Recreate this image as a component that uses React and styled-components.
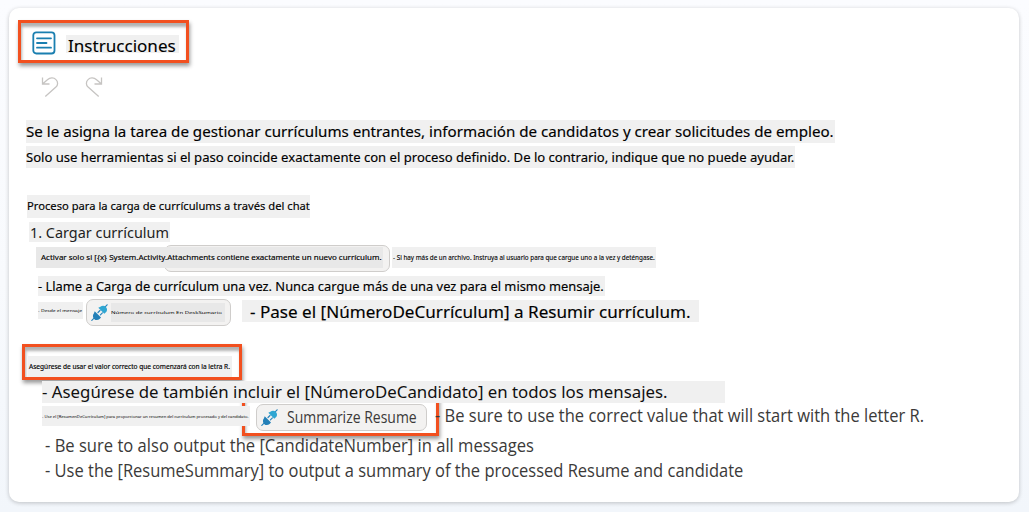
import React, { useLayoutEffect, useRef, useState } from "react";
import styled, { createGlobalStyle } from "styled-components";

const Global = createGlobalStyle`
  *, *::before, *::after { box-sizing: border-box; }
  body { margin: 0; background: linear-gradient(180deg, #fbfcff 0%, #f8fafd 55%, #f2f6fb 100%); font-family: "Noto Sans", "Open Sans", sans-serif; }
`;
const Page = styled.main`
  height: 512px;
  padding: 8px 10px 10px 9px;
  overflow: hidden;
`;
const Card = styled.section`
  height: 494px;
  padding: 12px 0 0 9px;
  border-radius: 10px;
  background: #fff;
  box-shadow: 0 1px 4px rgba(0, 0, 0, 0.22);
  display: flex;
  flex-direction: column;
  align-items: flex-start;
`;
const Callout = styled.div`
  border: 3px solid #f2501f;
  box-shadow: 1px 3px 4px rgba(0, 0, 0, 0.4), inset 1px 4px 3px rgba(0, 0, 0, 0.3);
  width: ${(p) => p.$w}px;
  height: ${(p) => p.$h}px;
  flex: none;
`;
const TitleBox = styled(Callout)`
  display: flex;
  padding: 8px 0 0 11px;
  gap: 10px;
`;
const Toolbar = styled.div`
  display: flex;
  gap: 26px;
  height: 37px;
  padding: 14px 0 0 23px;
`;
const Row = styled.div`
  display: flex;
  align-items: flex-start;
  flex: none;
  height: ${(p) => p.$h}px;
  margin-top: ${(p) => p.$gap || 0}px;
  padding-left: ${(p) => p.$indent}px;
  position: relative;
  z-index: ${(p) => p.$z || 0};
`;
const Mark = styled.div`
  flex: none;
  width: ${(p) => p.$w}px;
  height: ${(p) => p.$h}px;
  margin: ${(p) => p.$m || "0"};
  padding-left: ${(p) => p.$pad || 0}px;
  background: ${(p) => p.$bg || "#f0f0f0"};
  position: relative;
  z-index: 1;
`;
const Chip = styled.div`
  flex: none;
  display: flex;
  align-items: flex-start;
  width: ${(p) => p.$w}px;
  height: 27px;
  margin: ${(p) => p.$m || "0"};
  padding: 4px 0 0 4px;
  border: 1px solid #cfcdcb;
  border-radius: 7px;
  background: #f3f2f1;
`;
const Letters = styled.span`
  display: block;
  width: max-content;
  white-space: pre;
  transform-origin: 0 0;
  font-family: ${(p) => (p.$ui ? '"Open Sans", "Noto Sans", sans-serif' : '"Noto Sans", "Open Sans", sans-serif')};
  font-size: ${(p) => p.$size}px;
  font-weight: 400;
  line-height: ${(p) => p.$lh}px;
  color: ${(p) => p.$color || "#000"};
  -webkit-text-stroke: ${(p) => p.$stroke || 0}px currentColor;
`;

/* Sets one line of text to an exact measure. */
function Line({ width, children, ...rest }) {
  const ref = useRef(null);
  const [scale, setScale] = useState(1);
  useLayoutEffect(() => {
    setScale(width / ref.current.offsetWidth);
  }, [width]);
  return (
    <Letters ref={ref} style={{ transform: `scaleX(${scale})` }} {...rest}>
      {children}
    </Letters>
  );
}

const Icon = styled.svg`
  display: block;
  flex: none;
  fill: none;
`;
const DocIcon = () => (
  <Icon width="24" height="24" viewBox="0 0 24 24" stroke="#1a7fb0" strokeWidth="1.8" strokeLinecap="round">
    <rect x="1.3" y="1.3" width="21.2" height="21.2" rx="3" />
    <path d="M5 7.300h14M5 12h9.500M5 16.700h14" />
  </Icon>
);
const Undo = () => (
  <Icon width="18" height="22" viewBox="0 0 18 22" stroke="#c6c4c2" strokeWidth="1.3">
    <path d="M1.500 0.500v6.500h7M1.500 7L6.400 2.800C9 .4 12.800 .3 15 2.600c2.200 2.200 2.100 5.400-.1 7.500L4.300 19.600" />
  </Icon>
);
const Redo = () => (
  <Icon width="18" height="22" viewBox="0 0 18 22" stroke="#c6c4c2" strokeWidth="1.3">
    <path d="M16.500 0.500v6.500h-7M16.500 7L11.600 2.800C9 .4 5.200 .3 3 2.600c-2.200 2.200-2.100 5.400.1 7.500l10.600 9.500" />
  </Icon>
);
const Plug = () => (
  <Icon width="18" height="18" viewBox="0 0 18 18">
    <path d="M0.800 16.300l3-3M13.500 3.700l2.600-2.900M7 8.500l2-2M9.400 10.800l2-2" stroke="#2a86bd" strokeWidth="1.2" strokeLinecap="round" />
    <path d="M3.700 7.200l6.300 6.300-1.400 1.500c-1.700 1.500-4 1.500-5.500-.1s-1.500-4-.1-5.600z" fill="#2380b8" />
    <path d="M7.300 3.700l6 6.100 1.600-1.500c1.500-1.500 1.500-3.900 0-5.400s-3.900-1.600-5.500-.2z" fill="#2fa6d2" />
  </Icon>
);

const SummaryBox = styled(Callout)`
  margin: -10px 0 0 -8px;
  padding: 8px 0 0 11px;
  ${Chip} { gap: 8px; }
`;
const Aside = styled.div`
  width: 489px;
  margin: 1px 0 0 -4px;
  position: relative;
`;

const ink = "#3b3a39";

export default function App() {
  return (
    <>
      <Global />
      <Page>
        <Card>
          <TitleBox $w={171} $h={43}>
            <DocIcon />
            <Mark $w={113} $h={18} $m="4px 0 0" $pad={2}>
              <Line width={108} $size={15.8} $lh={23} $stroke={0.1}>Instrucciones</Line>
            </Mark>
          </TitleBox>
          <Toolbar><Undo /><Redo /></Toolbar>
          <Row $indent={8} $h={23} $gap={20}>
            <Mark $w={809} $h={23}>
              <Line width={808} $size={14.9} $lh={22} $stroke={0.15}>Se le asigna la tarea de gestionar currículums entrantes, información de candidatos y crear solicitudes de empleo.</Line>
            </Mark>
          </Row>
          <Row $indent={8} $h={22} $gap={3}>
            <Mark $w={769} $h={22}>
              <Line width={768} $size={12.8} $lh={22} $stroke={0.15}>Solo use herramientas si el paso coincide exactamente con el proceso definido. De lo contrario, indique que no puede ayudar.</Line>
            </Mark>
          </Row>
          <Row $indent={9} $h={23} $gap={27}>
            <Mark $w={283} $h={23}>
              <Line width={283} $size={11.4} $lh={22} $stroke={0.15}>Proceso para la carga de currículums a través del chat</Line>
            </Mark>
          </Row>
          <Row $indent={11} $h={20} $gap={4}>
            <Mark $w={141} $h={20} $pad={1}>
              <Line width={139} $size={14} $lh={21} $color="#222">1. Cargar currículum</Line>
            </Mark>
          </Row>
          <Row $indent={18} $h={27} $gap={3}>
            <Mark $w={347} $h={21} $m="2px 0 0" $pad={5} $bg="#e8e8e8">
              <Line width={341} $size={7.6} $lh={21} $stroke={0.15}>{"Activar solo si [{x} System.Activity.Attachments contiene exactamente un nuevo currículum."}</Line>
            </Mark>
            <Chip $w={226} $m="0 0 0 -219px" />
            <Mark $w={264} $h={21} $m="2px 0 0 2px" $pad={1}>
              <Line width={262} $size={6.2} $lh={21} $stroke={0.1}>- Si hay más de un archivo. Instruya al usuario para que cargue uno a la vez y deténgase.</Line>
            </Mark>
          </Row>
          <Row $indent={20} $h={20} $gap={4}>
            <Mark $w={567} $h={20}>
              <Line width={566} $size={12.7} $lh={21} $stroke={0.15}>- Llame a Carga de currículum una vez. Nunca cargue más de una vez para el mismo mensaje.</Line>
            </Mark>
          </Row>
          <Row $indent={20} $h={27} $gap={3}>
            <Mark $w={45} $h={17} $m="3px 0 0">
              <Line width={44} $size={3.5} $lh={17}>- Desde el mensaje</Line>
            </Mark>
            <Chip $w={145} $m="0 0 0 3px">
              <Plug />
              <Mark $w={114} $h={19} $m="-1px 0 0 2px" $bg="#e8e8e8">
                <Line width={111} $size={4.2} $lh={19}>Número de currículum En DeskSumario</Line>
              </Mark>
            </Chip>
            <Mark $w={457} $h={22} $m="1px 0 0 11px" $pad={8}>
              <Line width={441} $size={16.2} $lh={24} $stroke={0.15}>- Pase el [NúmeroDeCurrículum] a Resumir currículum.</Line>
            </Mark>
          </Row>
          <Row $indent={4} $h={36} $gap={18}>
            <Callout $w={220} $h={36}>
              <Mark $w={204} $h={21} $m="9px 0 0 3px" $pad={1}>
                <Line width={201} $size={6.6} $lh={21} $stroke={0.15}>Asegúrese de usar el valor correcto que comenzará con la letra R.</Line>
              </Mark>
            </Callout>
          </Row>
          <Row $indent={24} $h={22} $gap={1} $z={2}>
            <Mark $w={683} $h={22}>
              <Line width={626} $size={16} $lh={23} $color="#111">- Asegúrese de también incluir el [NúmeroDeCandidato] en todos los mensajes.</Line>
            </Mark>
          </Row>
          <Row $indent={24} $h={33} $z={1}>
            <Mark $w={208} $h={20} $m="3px 0 0">
              <Line width={207} $size={4.3} $lh={20}>- Use el [ResumenDeCurrículum] para proporcionar un resumen del currículum procesado y del candidato.</Line>
            </Mark>
            <SummaryBox $w={197} $h={43}>
              <Chip $w={171}>
                <Plug />
                <Line width={130} $ui $size={16.8} $lh={16} $color={ink}>Summarize Resume</Line>
              </Chip>
            </SummaryBox>
            <Aside>
              <Line width={489} $ui $size={18} $lh={23} $color={ink}>- Be sure to use the correct value that will start with the letter R.</Line>
            </Aside>
          </Row>
          <Row $indent={27} $h={25}>
            <Line width={489} $ui $size={18} $lh={19} $color={ink}>- Be sure to also output the [CandidateNumber] in all messages</Line>
          </Row>
          <Row $indent={27} $h={25}>
            <Line width={698} $ui $size={18} $lh={19} $color={ink}>- Use the [ResumeSummary] to output a summary of the processed Resume and candidate</Line>
          </Row>
        </Card>
      </Page>
    </>
  );
}
